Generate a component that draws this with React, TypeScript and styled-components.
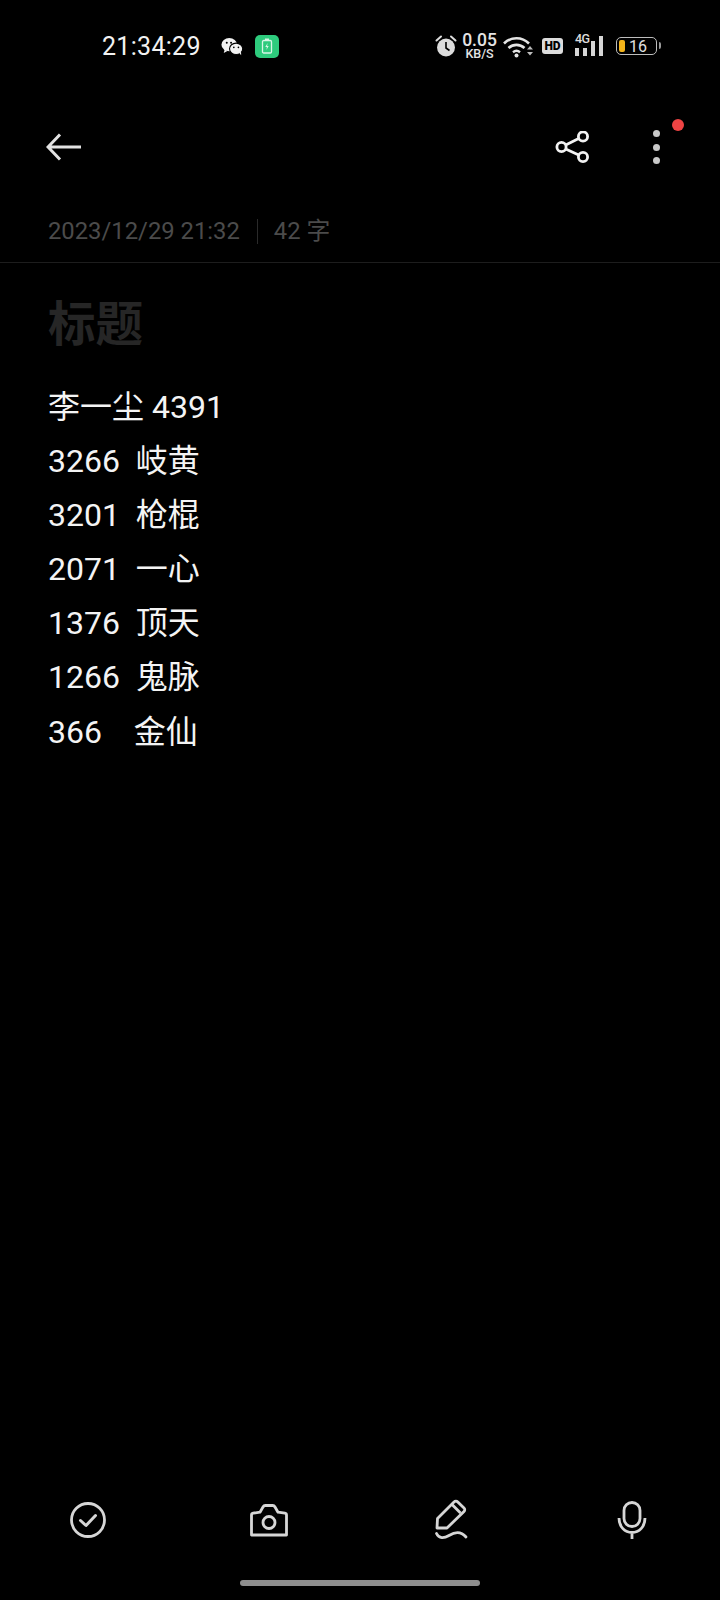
import { createGlobalStyle } from 'styled-components';
import styled from 'styled-components';

const GlobalStyle = createGlobalStyle`
  html, body {
    margin: 0;
    padding: 0;
    background: #000;
  }
  body {
    font-family: Roboto, "Noto Sans CJK SC", sans-serif;
  }
`;

const Page = styled.div`
  width: 720px;
  height: 1600px;
  background: #000;
  display: flex;
  flex-direction: column;
  overflow: hidden;
`;

const StatusBar = styled.div`
  height: 92px;
  padding: 0 63px 0 102px;
  display: flex;
  align-items: center;
  justify-content: space-between;
  box-sizing: border-box;
`;

const StatusLeft = styled.div`
  display: flex;
  align-items: center;
`;

const Clock = styled.span`
  color: #f2f2f2;
  font-size: 25px;
  font-weight: 400;
  letter-spacing: 0.3px;
  width: 119px;
`;

const AppBadge = styled.div`
  width: 24px;
  height: 23px;
  border-radius: 5px;
  background: #2ecb7d;
  margin-left: 12px;
  display: flex;
  align-items: center;
  justify-content: center;
`;

const StatusRight = styled.div`
  display: flex;
  align-items: center;
`;

const Speed = styled.div`
  display: flex;
  flex-direction: column;
  align-items: center;
  color: #e4e4e4;
  font-weight: 500;
  margin-left: 5px;
  width: 35px;
`;

const SpeedValue = styled.span`
  font-size: 17.5px;
  line-height: 14px;
`;

const SpeedUnit = styled.span`
  font-size: 12.5px;
  line-height: 11px;
  margin-top: 1px;
`;

const HdBadge = styled.span`
  width: 21px;
  height: 16px;
  border-radius: 3px;
  background: #dcdcdc;
  color: #000;
  font-size: 12px;
  font-weight: 900;
  line-height: 16px;
  text-align: center;
  margin-left: 8px;
`;

const Signal = styled.div`
  position: relative;
  width: 30px;
  height: 20px;
  margin-left: 12px;
  display: flex;
  align-items: flex-end;
  gap: 4px;
`;

const SignalTag = styled.span`
  position: absolute;
  left: 0;
  top: -4px;
  color: #dcdcdc;
  font-size: 12.5px;
  line-height: 14px;
  font-weight: 500;
  letter-spacing: -0.5px;
`;

const SignalBar = styled.span<{ $h: number }>`
  width: 4px;
  height: ${(p) => p.$h}px;
  background: #d6d6d6;
`;

const Battery = styled.div`
  width: 41px;
  height: 18px;
  margin-left: 11px;
  border: 1.5px solid #bdbdbd;
  border-radius: 5px;
  display: flex;
  align-items: center;
  padding-left: 2px;
  gap: 4px;
  position: relative;
  box-sizing: border-box;
  &::after {
    content: '';
    position: absolute;
    right: -5px;
    top: 4px;
    width: 2px;
    height: 7px;
    background: #9a9a9a;
    border-radius: 0 2px 2px 0;
  }
`;

const BatteryFill = styled.span`
  width: 6px;
  height: 12px;
  border-radius: 2px;
  background: #f4b41a;
`;

const BatteryLabel = styled.span`
  color: #e0e0e0;
  font-size: 16px;
  line-height: 15px;
`;

const Toolbar = styled.div`
  height: 110px;
  padding: 0 52px 0 46px;
  display: flex;
  align-items: center;
  justify-content: space-between;
  box-sizing: border-box;
`;

const ToolbarActions = styled.div`
  display: flex;
  align-items: center;
  gap: 53px;
`;

const MoreButton = styled.div`
  position: relative;
  width: 24px;
  height: 34px;
  display: flex;
  flex-direction: column;
  align-items: center;
  justify-content: center;
  gap: 6.5px;
`;

const MoreDot = styled.span`
  width: 7px;
  height: 7px;
  border-radius: 50%;
  background: #c9c9c9;
`;

const RedDot = styled.span`
  position: absolute;
  left: 28px;
  top: -11px;
  width: 12px;
  height: 12px;
  border-radius: 50%;
  background: #ef4444;
`;

const Meta = styled.div`
  height: 61px;
  padding: 0 48px 2px;
  display: flex;
  align-items: center;
  box-sizing: border-box;
  border-bottom: 1px solid #1d1d1d;
  color: #4b4b4b;
  font-size: 23.8px;
`;

const MetaText = styled.span`
  line-height: 30px;
`;

const MetaSep = styled.span`
  width: 1px;
  height: 25px;
  background: #2a2a2a;
  margin: 0 16px 0 17px;
`;

const Content = styled.div`
  flex: 1;
  padding: 0 48px;
`;

const Title = styled.div`
  margin-top: 32px;
  color: #262626;
  font-size: 47.5px;
  font-weight: 700;
  line-height: 60px;
`;

const Body = styled.div`
  margin-top: 25px;
  color: #f4f4f4;
  font-size: 32px;
  line-height: 54.1px;
  white-space: pre;
`;

const BottomBar = styled.div`
  height: 60px;
  padding: 0 68px;
  display: flex;
  align-items: center;
  justify-content: space-between;
`;

const BottomIcon = styled.div`
  width: 40px;
  height: 44px;
  display: flex;
  align-items: center;
  justify-content: center;
`;

const HomeRow = styled.div`
  height: 50px;
  display: flex;
  justify-content: center;
  padding-top: 30px;
  box-sizing: border-box;
`;

const HomeBar = styled.div`
  width: 240px;
  height: 6px;
  border-radius: 3px;
  background: #8e8e8e;
`;

const lines = [
  '李一尘 4391',
  '3266  岐黄',
  '3201  枪棍',
  '2071  一心',
  '1376  顶天',
  '1266  鬼脉',
  '366    金仙',
];

export default function App() {
  return (
    <Page>
      <GlobalStyle />
      <StatusBar>
        <StatusLeft>
          <Clock>21:34:29</Clock>
          <svg width="22" height="19" viewBox="0 0 24 20">
            <ellipse cx="9" cy="8" rx="8.5" ry="7.2" fill="#f2f2f2" />
            <path d="M4 13l-1 4 4-2z" fill="#f2f2f2" />
            <ellipse cx="16.5" cy="12.5" rx="7.2" ry="6.2" fill="#f2f2f2" stroke="#000" strokeWidth="1.2" />
            <path d="M20 17l2 2.5-.2-4z" fill="#f2f2f2" />
            <circle cx="6.3" cy="6" r="1.1" fill="#000" />
            <circle cx="11" cy="6" r="1.1" fill="#000" />
            <circle cx="14" cy="11" r="0.9" fill="#000" />
            <circle cx="19" cy="11" r="0.9" fill="#000" />
          </svg>
          <AppBadge>
            <svg width="12" height="16" viewBox="0 0 12 16">
              <rect x="1.5" y="2.5" width="9" height="12.5" rx="1.2" fill="none" stroke="#d8f5e6" strokeWidth="1.3" />
              <rect x="4" y="0.5" width="4" height="2" fill="#d8f5e6" />
              <path d="M6.6 5L4.3 9h1.6l-.5 3 2.3-4H6.1z" fill="#d8f5e6" />
            </svg>
          </AppBadge>
        </StatusLeft>
        <StatusRight>
          <svg width="22" height="24" viewBox="0 0 22 24">
            <circle cx="11" cy="13.5" r="9" fill="#dcdcdc" />
            <path d="M11 8v6l3.5 2.5" fill="none" stroke="#000" strokeWidth="1.6" />
            <path d="M1.5 6.5L6 2.5M20.5 6.5L16 2.5" stroke="#dcdcdc" strokeWidth="2" strokeLinecap="round" />
          </svg>
          <Speed>
            <SpeedValue>0.05</SpeedValue>
            <SpeedUnit>KB/S</SpeedUnit>
          </Speed>
          <svg width="31" height="24" viewBox="0 0 31 24" style={{ marginLeft: 6 }}>
            <path d="M1 9.5C8 2.5 19 2.5 26 9.5" fill="none" stroke="#e4e4e4" strokeWidth="2.6" />
            <path d="M5.5 14C10 9.8 17 9.8 21.5 14" fill="none" stroke="#e4e4e4" strokeWidth="2.6" />
            <path d="M10 18.3C12.3 16.4 14.7 16.4 17 18.3" fill="none" stroke="#e4e4e4" strokeWidth="2.4" />
            <circle cx="13.5" cy="21.5" r="2" fill="#e4e4e4" />
            <path d="M24 15.5l3-3.5 3 3.5zM24 18l3 3.5 3-3.5z" fill="#bdbdbd" />
          </svg>
          <HdBadge>HD</HdBadge>
          <Signal>
            <SignalTag>4G</SignalTag>
            <SignalBar $h={8} />
            <SignalBar $h={8} />
            <SignalBar $h={15} />
            <SignalBar $h={20} />
          </Signal>
          <Battery>
            <BatteryFill />
            <BatteryLabel>16</BatteryLabel>
          </Battery>
        </StatusRight>
      </StatusBar>

      <Toolbar>
        <svg width="36" height="28" viewBox="0 0 36 28">
          <path d="M35 14H2.5M14 1.5L2 14 14 26.5" fill="none" stroke="#e2e2e2" strokeWidth="3" />
        </svg>
        <ToolbarActions>
          <svg width="36" height="32" viewBox="0 0 36 32">
            <circle cx="6.5" cy="16" r="4.6" fill="none" stroke="#f2f2f2" strokeWidth="2.8" />
            <circle cx="28" cy="5.5" r="4.6" fill="none" stroke="#f2f2f2" strokeWidth="2.8" />
            <circle cx="28" cy="26" r="4.6" fill="none" stroke="#f2f2f2" strokeWidth="2.8" />
            <path d="M10.7 14l13-6.5M10.7 18l13 6" stroke="#f2f2f2" strokeWidth="2.8" />
          </svg>
          <MoreButton>
            <MoreDot />
            <MoreDot />
            <MoreDot />
            <RedDot />
          </MoreButton>
        </ToolbarActions>
      </Toolbar>

      <Meta>
        <MetaText>2023/12/29 21:32</MetaText>
        <MetaSep />
        <MetaText>42 字</MetaText>
      </Meta>

      <Content>
        <Title>标题</Title>
        <Body>
          {lines.map((line) => (
            <div key={line}>{line}</div>
          ))}
        </Body>
      </Content>

      <BottomBar>
        <BottomIcon>
          <svg width="36" height="36" viewBox="0 0 36 36">
            <circle cx="18" cy="18" r="16.5" fill="none" stroke="#d6d6d6" strokeWidth="2.8" />
            <path d="M10.5 18.5l5.5 5 9.5-10" fill="none" stroke="#d6d6d6" strokeWidth="3" strokeLinecap="round" strokeLinejoin="round" />
          </svg>
        </BottomIcon>
        <BottomIcon>
          <svg width="40" height="36" viewBox="0 0 40 36">
            <path
              d="M2.5 33V13c0-1 .6-1.6 1.6-1.8l6.9-1 3-5.2c.5-.9 1.2-1.5 2.3-1.5h7.4c1.1 0 1.8.6 2.3 1.5l3 5.2 6.9 1c1 .2 1.6.8 1.6 1.8v20z"
              fill="none"
              stroke="#d6d6d6"
              strokeWidth="2.8"
              strokeLinejoin="round"
            />
            <circle cx="20" cy="20.5" r="6" fill="none" stroke="#d6d6d6" strokeWidth="2.8" />
          </svg>
        </BottomIcon>
        <BottomIcon>
          <svg width="34" height="42" viewBox="0 0 34 42">
            <path
              d="M3 29L3.5 19.5 20 3c1.2-1.2 2.6-1.2 3.8 0l6.2 6c1 1 1 2.4 0 3.4L13 29z"
              fill="none"
              stroke="#d6d6d6"
              strokeWidth="2.8"
              strokeLinejoin="round"
            />
            <path d="M18 5.5l8.5 8.5" stroke="#d6d6d6" strokeWidth="2.8" />
            <path d="M2.5 34.500C5 40 10 39.500 15 36.500S26 31 32 38" fill="none" stroke="#d6d6d6" strokeWidth="2.8" strokeLinecap="round" />
          </svg>
        </BottomIcon>
        <BottomIcon>
          <svg width="30" height="38" viewBox="0 0 30 38">
            <rect x="7" y="1.5" width="16" height="24" rx="8" fill="none" stroke="#d6d6d6" strokeWidth="2.8" />
            <path d="M2 17c0 9 6 14.500 13 14.500S28 26 28 17M15 31.500v6.500" fill="none" stroke="#d6d6d6" strokeWidth="2.8" />
          </svg>
        </BottomIcon>
      </BottomBar>

      <HomeRow>
        <HomeBar />
      </HomeRow>
    </Page>
  );
}
